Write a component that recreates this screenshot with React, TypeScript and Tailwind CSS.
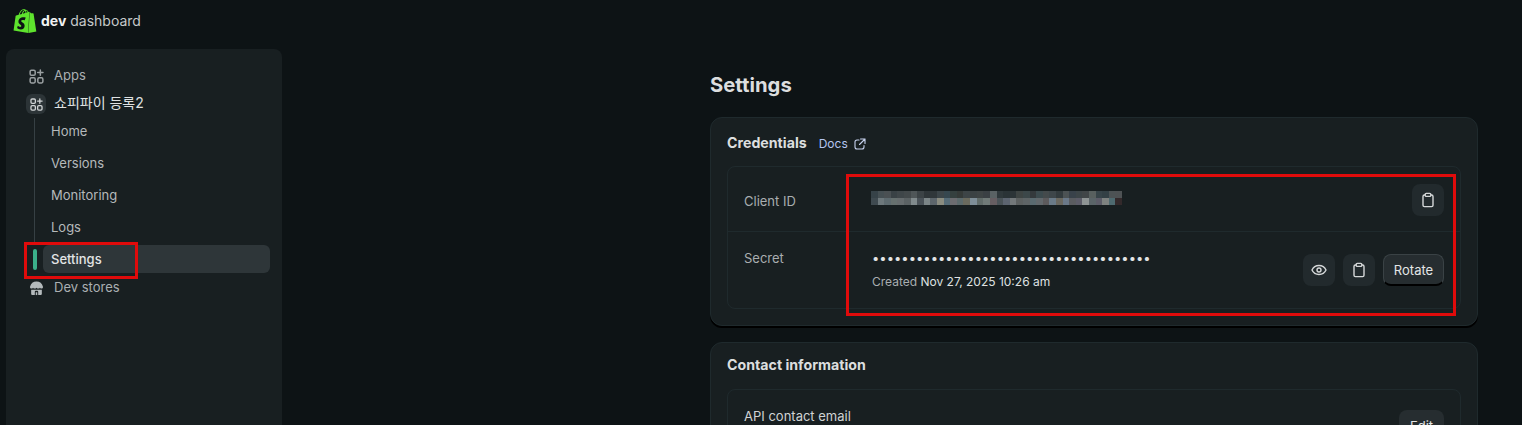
import React from "react";
import { SiShopify } from "react-icons/si";

const AppsIcon = ({ className = "" }: { className?: string }) => (
  <svg viewBox="0 0 16 16" fill="none" stroke="currentColor" strokeWidth="1.6" className={className}>
    <rect x="1.2" y="1.2" width="5.4" height="5.4" rx="1.4" />
    <rect x="1.2" y="9.400" width="5.4" height="5.4" rx="1.4" />
    <rect x="9.400" y="9.400" width="5.4" height="5.4" rx="1.4" />
    <path d="M12.100 1v5.600M9.300 3.800h5.600" strokeLinecap="round" />
  </svg>
);

const StoreIcon = () => (
  <svg viewBox="0 0 16 16" width="15" height="15" className="text-[#b4babc]" fill="currentColor">
    <path d="M8 .6c3.600 0 6 1.900 6.900 5.600.2 1-.5 1.900-1.500 1.900-.7 0-1.300-.4-1.700-1-.4.600-1 1-1.800 1-.8 0-1.400-.4-1.900-1-.5.600-1.100 1-1.900 1-.8 0-1.400-.4-1.800-1-.4.600-1 1-1.700 1-1 0-1.700-.9-1.500-1.900C2 2.500 4.400.6 8 .6z" />
    <path fillRule="evenodd" d="M2.300 9.200h11.400v4.400c0 .8-.6 1.400-1.400 1.400H3.700c-.8 0-1.400-.6-1.400-1.400V9.200zm3.900 2.300V15h3.600v-3.500c0-.6-.4-1-1-1H7.200c-.6 0-1 .4-1 1z" />
    <path d="M7.200 12h1.600v3H7.200z" />
  </svg>
);

const ClipboardIcon = () => (
  <svg viewBox="0 0 16 16" width="16" height="16" fill="none" stroke="#d5d8d9" strokeWidth="1.4">
    <path d="M5.200 3H4.400C3.600 3 3 3.600 3 4.400v8.800c0 .8.600 1.400 1.400 1.400h7.200c.8 0 1.400-.6 1.400-1.400V4.400C13 3.600 12.400 3 11.600 3h-.8" />
    <rect x="5.200" y="1.400" width="5.600" height="3" rx="1" />
  </svg>
);

const EyeIcon = () => (
  <svg viewBox="0 0 16 16" width="16" height="16" fill="none" stroke="#d5d8d9" strokeWidth="1.4">
    <path d="M1 8c1.300-2.800 3.900-4.500 7-4.500s5.700 1.700 7 4.500c-1.300 2.800-3.900 4.500-7 4.500S2.300 10.800 1 8z" />
    <circle cx="8" cy="8" r="2" />
  </svg>
);

const ExternalIcon = () => (
  <svg viewBox="0 0 12 12" width="12" height="12" fill="none" stroke="#c8d3f0" strokeWidth="1.1" strokeLinecap="round" strokeLinejoin="round">
    <path d="M5 2H3a2 2 0 0 0-2 2v5a2 2 0 0 0 2 2h5a2 2 0 0 0 2-2V7.500" />
    <path d="M6.500 1h4.500v4.500M11 1 5.500 6.500" />
  </svg>
);

const pixelRows = [
  ["#364248","#454f53","#4a5053","#394145","#3f4649","#43494b","#4f5658","#3c4346","#2f3639","#30373a","#3c4549","#36474f","#35403f","#353a38","#3d4446","#3b4244","#3e4445","#3a4044","#5a6264","#2f383b","#2a3336","#2c3437","#3e4443","#3c4749","#34393c","#3c4a4e","#444a4c","#3e464a","#333b3e","#4c5254","#39424a","#3d4548","#414648","#58605f","#374449","#334045","#4d5355","#4e5254"],
  ["#3f4a50","#6d787c","#5e6b70","#66706f","#666c6e","#5b6264","#808a8c","#4a5258","#7b8587","#5d666c","#8a8c80","#566c78","#6c6c70","#5c6a6c","#6a6a5e","#7e8e98","#616c6a","#707a78","#665e62","#4a5358","#5c6470","#73787a","#5c6060","#5e6466","#5a6a70","#62686c","#5c5a5c","#6a7a88","#6a6860","#6a7888","#5a5c60","#5c5c68","#8e9494","#5a6468","#5c5c68","#7e8280","#4e6a70","#33292b"],
];

const Pixelated = () => (
  <svg width="251" height="14" shapeRendering="crispEdges" aria-hidden="true" className="-ml-px">
    {pixelRows.map((row, y) =>
      row.map((c, x) => (
        <rect key={`${y}-${x}`} x={x * (251 / 38)} y={y * 7} width={251 / 38 + 0.5} height="7" fill={c} />
      ))
    )}
  </svg>
);

const SquareButton = ({ children }: { children: React.ReactNode }) => (
  <button className="flex h-8 w-8 items-center justify-center rounded-lg bg-[#222a2d]">{children}</button>
);

const SubItem = ({ label }: { label: string }) => (
  <div className="flex h-8 items-center pl-[39px] text-[13px] text-[#b5b9bb]">{label}</div>
);

export default function App() {
  return (
    <div className="relative flex h-[425px] w-[1522px] flex-col overflow-hidden bg-[#0d1315] font-['Inter','Noto_Sans_CJK_KR',sans-serif] text-[13px] text-[#b5b9bb]">
      <header className="flex h-[49px] shrink-0 items-start gap-[3px] pl-[12px] pt-[9px]">
        <SiShopify className="h-[24px] w-[26px] text-[#5ee32d]" preserveAspectRatio="none" />
        <div className="pt-[3px] text-[14px] leading-[18px] text-[#c6c9ca]">
          <span className="font-bold text-[#f1f2f2]">dev</span> dashboard
        </div>
      </header>

      <div className="flex min-h-0 flex-1">
        <aside className="ml-[6px] w-[276px] shrink-0 rounded-t-lg bg-[#181f21] pl-[6px] pr-3 pt-[13px]">
          <div className="flex h-7 items-center gap-[10px] pl-[17px]">
            <AppsIcon className="h-[15px] w-[15px] text-[#9aa0a2]" />
            <span className="text-[#abb0b2]">Apps</span>
          </div>
          <div className="flex h-7 items-center gap-[8px] pl-[14px]">
            <span className="flex h-5 w-5 items-center justify-center rounded-md bg-[#2c3437] text-[#d0d4d5]">
              <AppsIcon className="h-[13px] w-[13px]" />
            </span>
            <span className="pb-[2px] text-[14px] leading-5 text-[#dfe1e2]">쇼피파이 등록2</span>
          </div>
          <div className="relative -mt-[2px]">
            <div className="absolute left-[22px] top-[2px] h-[126px] w-px bg-[#364044]" />
            <SubItem label="Home" />
            <SubItem label="Versions" />
            <SubItem label="Monitoring" />
            <SubItem label="Logs" />
            <div className="mt-[1px] flex h-[28px] items-center pl-[21px]">
              <span className="mr-[6px] h-[21px] w-1 rounded-full bg-[#3bb08a]" />
              <div className="flex h-7 flex-1 items-center rounded-md bg-[#2e3639] pl-2 pt-[1px] font-medium text-[#e3e5e6]">Settings</div>
            </div>
          </div>
          <div className="mt-[1px] flex h-7 items-center gap-[10px] pl-[17px]">
            <StoreIcon />
            <span className="text-[#abb0b2]">Dev stores</span>
          </div>
        </aside>

        <main className="min-w-0 flex-1 pl-[428px] pr-[44px]">
          <h1 className="pt-[23px] text-[20.300px] font-bold leading-[26px] text-[#dcdedf]">Settings</h1>

          <section className="mt-[19px] h-[209px] rounded-xl border border-[#1f2a2d] bg-[#181f21] px-4 shadow-[0_2px_0_#000]">
            <div className="flex h-[48px] items-center gap-[12px] pt-[1px]">
              <h2 className="text-[14.200px] font-bold text-[#dcdedf]">Credentials</h2>
              <a className="flex items-center gap-[6px] pt-[3px] text-[12px] text-[#b4c5f0]">
                Docs <ExternalIcon />
              </a>
            </div>
            <div className="rounded-lg border border-[#1f2a2d]">
              <div className="flex h-[65px] border-b border-[#1f2a2d]">
                <div className="w-[144px] shrink-0 pl-4 pt-[26px] leading-4 text-[#a9aeb0]">Client ID</div>
                <div className="flex-1 pt-[24px]"><Pixelated /></div>
                <div className="pr-4 pt-[17px]"><SquareButton><ClipboardIcon /></SquareButton></div>
              </div>
              <div className="flex h-[76px]">
                <div className="w-[144px] shrink-0 pl-4 pt-[18px] leading-4 text-[#a9aeb0]">Secret</div>
                <div className="flex-1 pt-[16px]">
                  <div className="text-[13px] leading-5 tracking-[0.02px] text-[#e3e5e6]">{"•".repeat(38)}</div>
                  <div className="mt-[4px] text-[12px] leading-5 text-[#a9aeb0]">
                    Created <span className="text-[#dfe1e2]">Nov 27, 2025 10:26 am</span>
                  </div>
                </div>
                <div className="flex items-start gap-2 pr-4 pt-[22px]">
                  <SquareButton><EyeIcon /></SquareButton>
                  <SquareButton><ClipboardIcon /></SquareButton>
                  <button className="h-8 w-[61px] rounded-lg border border-b-2 border-[#3a4245] border-b-black bg-[#262d30] pt-[2px] text-[13px] text-[#e3e5e6]">Rotate</button>
                </div>
              </div>
            </div>
          </section>

          <section className="mt-4 h-[120px] rounded-xl border border-[#1f2a2d] bg-[#181f21] px-4">
            <h2 className="flex h-[46px] items-center pb-[3px] text-[14.200px] font-bold text-[#dcdedf]">Contact information</h2>
            <div className="flex h-[80px] justify-between rounded-lg border border-[#1f2a2d] px-4 pt-[18px]">
              <span className="leading-4 text-[#d0d3d4]">API contact email</span>
              <button className="mt-[2px] h-8 w-[45px] rounded-lg bg-[#262d30] pt-[2px] text-[13px] text-[#e3e5e6]">Edit</button>
            </div>
          </section>
        </main>
      </div>

      <div className="pointer-events-none absolute left-[24px] top-[242px] h-[37px] w-[114px] border-[3px] border-[#e00b0b]" />
      <div className="pointer-events-none absolute left-[846px] top-[174px] h-[142px] w-[610px] border-[3px] border-[#e00b0b]" />
    </div>
  );
}
